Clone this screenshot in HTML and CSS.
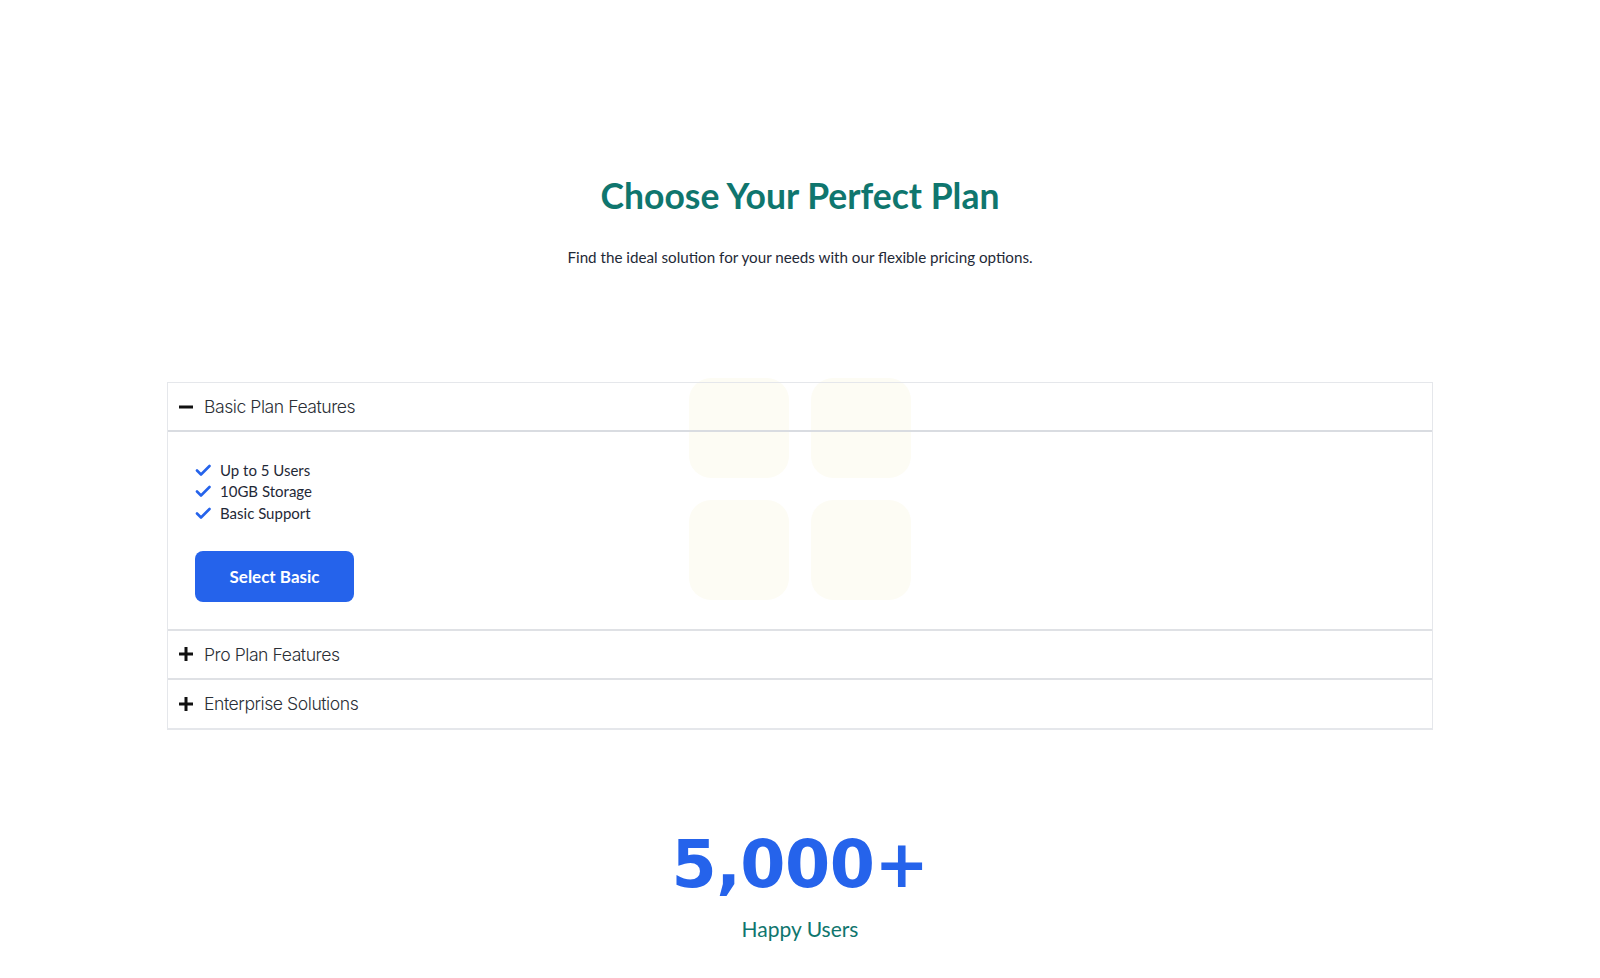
FILE: index.html
```html
<!DOCTYPE html>
<html lang="en">
<head>
<meta charset="utf-8">
<title>Choose Your Perfect Plan</title>
<link rel="stylesheet" href="styles.css">
</head>
<body>
<main class="page">
  <header class="hero">
    <h1 class="hero-title">Choose Your Perfect Plan</h1>
    <p class="hero-sub">Find the ideal solution for your needs with our flexible pricing options.</p>
  </header>

  <section class="plans">
    <div class="deco" aria-hidden="true">
      <span class="deco-sq"></span><span class="deco-sq"></span>
      <span class="deco-sq"></span><span class="deco-sq"></span>
    </div>
    <div class="accordion">
      <div class="acc-item open">
        <div class="acc-head">
          <svg class="acc-icon" viewBox="0 0 14 14" width="14" height="14"><rect x="0" y="5.5" width="14" height="3" fill="#111"/></svg>
          <span class="acc-title">Basic Plan Features</span>
        </div>
        <div class="acc-body">
          <ul class="features">
            <li><svg class="check" viewBox="0 0 16 16" width="16" height="16"><path d="M2 8.5l4 4L14.5 4" fill="none" stroke="#2563eb" stroke-width="2.6" stroke-linecap="round" stroke-linejoin="round"/></svg>Up to 5 Users</li>
            <li><svg class="check" viewBox="0 0 16 16" width="16" height="16"><path d="M2 8.5l4 4L14.5 4" fill="none" stroke="#2563eb" stroke-width="2.6" stroke-linecap="round" stroke-linejoin="round"/></svg>10GB Storage</li>
            <li><svg class="check" viewBox="0 0 16 16" width="16" height="16"><path d="M2 8.5l4 4L14.5 4" fill="none" stroke="#2563eb" stroke-width="2.6" stroke-linecap="round" stroke-linejoin="round"/></svg>Basic Support</li>
          </ul>
          <button class="btn">Select Basic</button>
        </div>
      </div>
      <div class="acc-item">
        <div class="acc-head">
          <svg class="acc-icon" viewBox="0 0 14 14" width="14" height="14"><rect x="0" y="5.5" width="14" height="3" fill="#111"/><rect x="5.5" y="0" width="3" height="14" fill="#111"/></svg>
          <span class="acc-title">Pro Plan Features</span>
        </div>
      </div>
      <div class="acc-item">
        <div class="acc-head">
          <svg class="acc-icon" viewBox="0 0 14 14" width="14" height="14"><rect x="0" y="5.5" width="14" height="3" fill="#111"/><rect x="5.5" y="0" width="3" height="14" fill="#111"/></svg>
          <span class="acc-title">Enterprise Solutions</span>
        </div>
      </div>
    </div>
  </section>

  <section class="stats">
    <div class="stat-num">5,000+</div>
    <div class="stat-label">Happy Users</div>
  </section>
</main>
</body>
</html>
```

FILE: styles.css
```css
* { box-sizing: border-box; }
html, body { margin: 0; padding: 0; background: #fff; }
body {
  font-family: "Lato", "Noto Sans", sans-serif;
  color: #1f2937;
}
.page {
  display: flex;
  flex-direction: column;
  min-height: 978px;
}
.hero {
  padding-top: 173px;
  text-align: center;
}
.hero-title {
  margin: 0;
  font-size: 35.5px;
  line-height: 46px;
  font-weight: 700;
  color: #0f766e;
}
.hero-sub {
  margin: 27px 0 0;
  font-size: 15.2px;
  line-height: 22px;
  color: #1f2937;
}
.plans {
  position: relative;
  margin: 114px 167px 0;
}
.deco {
  position: absolute;
  left: 50%;
  top: -4px;
  margin-left: -111px;
  display: grid;
  grid-template-columns: 100px 100px;
  gap: 22px;
  z-index: 0;
  pointer-events: none;
}
.deco-sq {
  width: 100px;
  height: 100px;
  border-radius: 22px;
  background: #fdfcf4;
}
.accordion {
  position: relative;
  z-index: 1;
  border: 1px solid #e5e7eb;
  border-bottom-width: 2px;
}
.acc-item + .acc-item { border-top: 2px solid #dfe1e5; }
.acc-head {
  height: 47px;
  display: flex;
  align-items: center;
  gap: 11px;
  padding-left: 11px;
}
.acc-item.open .acc-head {
  height: 49px;
  border-bottom: 2px solid #d9dce1;
}
.acc-item:last-child .acc-head { height: 48px; }
.acc-icon { flex: none; }
.acc-title {
  font-family: "Inter", sans-serif;
  font-weight: 300;
  font-size: 17.6px;
  color: #2b2f36;
  letter-spacing: -0.45px;
}
.acc-body {
  padding: 27px;
}
.features {
  list-style: none;
  margin: 0;
  padding: 0;
  display: flex;
  flex-direction: column;
}
.features li {
  display: flex;
  align-items: center;
  gap: 9px;
  height: 21.5px;
  font-size: 15px;
  color: #1f2937;
}
.check { flex: none; }
.btn {
  margin-top: 27px;
  width: 159px;
  height: 51px;
  border: none;
  border-radius: 8px;
  background: #2563eb;
  color: #fff;
  font-family: "Lato", sans-serif;
  font-weight: 700;
  font-size: 17px;
  cursor: pointer;
}
.stats {
  margin-top: 95px;
  text-align: center;
}
.stat-num {
  font-family: "DejaVu Sans", "Lato", sans-serif;
  font-size: 65px;
  line-height: 80px;
  font-weight: 700;
  color: #2563eb;
  letter-spacing: -0.5px;
}
.stat-label {
  margin-top: 11px;
  font-size: 21px;
  line-height: 26px;
  color: #0f766e;
}
```
